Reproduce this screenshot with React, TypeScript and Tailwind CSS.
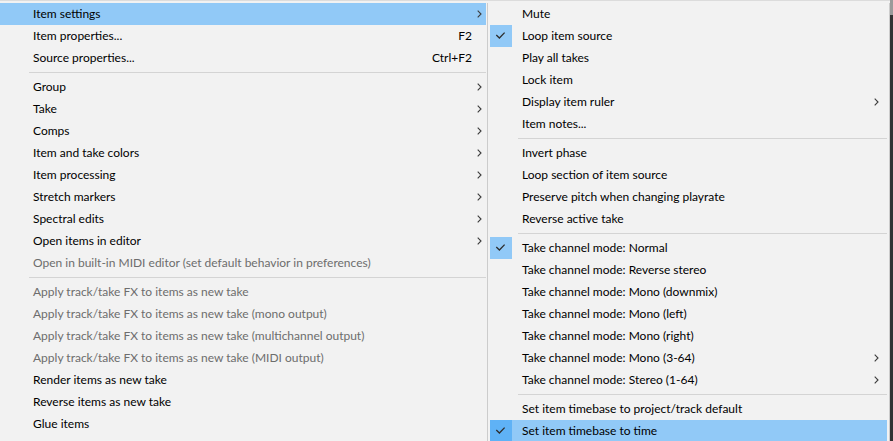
import React from 'react';

type Row =
  | { sep: true }
  | {
      sep?: false;
      label: string;
      shortcut?: string;
      arrow?: boolean;
      disabled?: boolean;
      checked?: boolean;
      active?: boolean;
    };

const leftRows: Row[] = [
  { label: 'Item settings', arrow: true, active: true },
  { label: 'Item properties...', shortcut: 'F2' },
  { label: 'Source properties...', shortcut: 'Ctrl+F2' },
  { sep: true },
  { label: 'Group', arrow: true },
  { label: 'Take', arrow: true },
  { label: 'Comps', arrow: true },
  { label: 'Item and take colors', arrow: true },
  { label: 'Item processing', arrow: true },
  { label: 'Stretch markers', arrow: true },
  { label: 'Spectral edits', arrow: true },
  { label: 'Open items in editor', arrow: true },
  { label: 'Open in built-in MIDI editor (set default behavior in preferences)', disabled: true },
  { sep: true },
  { label: 'Apply track/take FX to items as new take', disabled: true },
  { label: 'Apply track/take FX to items as new take (mono output)', disabled: true },
  { label: 'Apply track/take FX to items as new take (multichannel output)', disabled: true },
  { label: 'Apply track/take FX to items as new take (MIDI output)', disabled: true },
  { label: 'Render items as new take' },
  { label: 'Reverse items as new take' },
  { label: 'Glue items' },
];

const subRows: Row[] = [
  { label: 'Mute' },
  { label: 'Loop item source', checked: true },
  { label: 'Play all takes' },
  { label: 'Lock item' },
  { label: 'Display item ruler', arrow: true },
  { label: 'Item notes...' },
  { sep: true },
  { label: 'Invert phase' },
  { label: 'Loop section of item source' },
  { label: 'Preserve pitch when changing playrate' },
  { label: 'Reverse active take' },
  { sep: true },
  { label: 'Take channel mode: Normal', checked: true },
  { label: 'Take channel mode: Reverse stereo' },
  { label: 'Take channel mode: Mono (downmix)' },
  { label: 'Take channel mode: Mono (left)' },
  { label: 'Take channel mode: Mono (right)' },
  { label: 'Take channel mode: Mono (3-64)', arrow: true },
  { label: 'Take channel mode: Stereo (1-64)', arrow: true },
  { sep: true },
  { label: 'Set item timebase to project/track default' },
  { label: 'Set item timebase to time', checked: true, active: true },
];

const Chevron = () => (
  <svg width="5" height="8" viewBox="0 0 5 8" fill="none">
    <polyline points="0.7,0.7 4,4 0.7,7.3" stroke="#3c3c3c" strokeWidth="1.1" />
  </svg>
);

const Check = () => (
  <svg width="22" height="22" viewBox="0 0 22 22" fill="none">
    <polyline points="6.3,10 9.4,13 14.6,7.6" stroke="#2d2d2d" strokeWidth="1.3" />
  </svg>
);

const LeftMenu = () => (
  <div className="w-[487px] shrink-0 pr-[1px]">
    {leftRows.map((r, i) =>
      r.sep ? (
        <div key={i} className="h-[7px] flex items-center pl-[29px]">
          <div className="h-px w-full bg-[#d4d4d4]" />
        </div>
      ) : (
        <div
          key={i}
          className={`h-[22px] flex items-center pl-[33px] ${r.active ? 'bg-[#91c9f7]' : ''} ${
            r.disabled ? 'text-[#6d6d6d]' : 'text-black'
          }`}
        >
          <span className="flex-1 whitespace-nowrap">{r.label}</span>
          {r.shortcut && <span className="whitespace-nowrap">{r.shortcut}</span>}
          <span className="w-[14px] h-full flex items-center pl-[5px]">{r.arrow && <Chevron />}</span>
        </div>
      )
    )}
  </div>
);

const SubMenu = () => (
  <div className="w-[403px] shrink-0 border-l border-r border-[#cccccc] px-[2px]">
    {subRows.map((r, i) =>
      r.sep ? (
        <div key={i} className="h-[7px] flex items-center pl-[28px]">
          <div className="h-px w-full bg-[#d4d4d4]" />
        </div>
      ) : (
        <div key={i} className={`h-[22px] flex items-center text-black ${r.active ? 'bg-[#91c9f7]' : ''}`}>
          <span
            className={`w-[22px] h-[22px] shrink-0 flex items-center justify-center ${
              r.checked ? (r.active ? 'bg-[#5fb2f6]' : 'bg-[#91c9f7]') : ''
            }`}
          >
            {r.checked && <Check />}
          </span>
          <span className="flex-1 whitespace-nowrap pl-[10px]">{r.label}</span>
          <span className="w-[14px] h-full flex items-center pl-[1px]">{r.arrow && <Chevron />}</span>
        </div>
      )
    )}
  </div>
);

export default function App() {
  return (
    <div
      className="w-[893px] h-[441px] overflow-hidden flex bg-[#f2f2f2] text-[12px] leading-none"
      style={{ fontFamily: '"Segoe UI", Lato, "Liberation Sans", sans-serif' }}
    >
      <div className="flex-1 flex flex-col border-t border-[#dcdcdc] pt-[2px]">
        <div className="flex">
          <LeftMenu />
          <SubMenu />
        </div>
      </div>
      <div className="w-[3px] shrink-0 flex flex-col bg-[#333333]">
        <div className="h-[15px] bg-[#9a9a9a]" />
      </div>
    </div>
  );
}
